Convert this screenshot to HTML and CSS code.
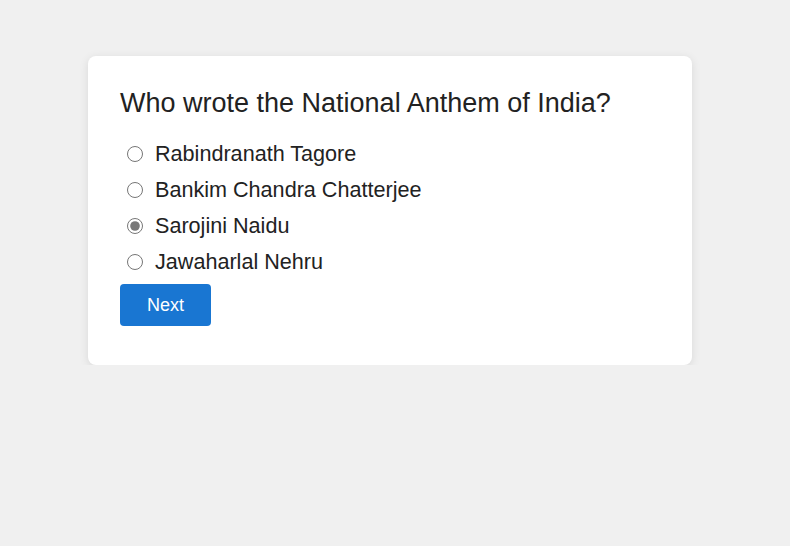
FILE: index.html
```html
<!DOCTYPE html>
<html>
<head>
<meta charset="utf-8">
<link rel="stylesheet" href="styles.css">
</head>
<body>
<div class="quiz">
  <h2 class="question">Who wrote the National Anthem of India?</h2>
  <div class="options">
    <label class="option"><input type="radio" name="q"> Rabindranath Tagore</label>
    <label class="option"><input type="radio" name="q"> Bankim Chandra Chatterjee</label>
    <label class="option"><input type="radio" name="q" checked> Sarojini Naidu</label>
    <label class="option"><input type="radio" name="q"> Jawaharlal Nehru</label>
  </div>
  <button class="next">Next</button>
</div>
</body>
</html>
```
FILE: styles.css
```css
html, body {
  margin: 0;
  padding: 0;
}
body {
  background: #f0f0f0;
  font-family: "Liberation Sans", Arial, sans-serif;
  color: #222;
  padding: 56px 98px 0 88px;
}
.quiz {
  background: #fff;
  width: 540px;
  padding: 32px 32px 39px;
  border-radius: 8px;
  box-shadow: 0 2px 10px rgba(0,0,0,0.1);
}
.question {
  font-size: 27px;
  line-height: 31px;
  font-weight: normal;
  margin: 0 0 17px;
}
.options {
  display: flex;
  flex-direction: column;
}
.option {
  font-size: 21.6px;
  line-height: 36px;
  height: 36px;
  display: flex;
  align-items: center;
}
.option input {
  width: 16px;
  height: 16px;
  margin: 0 12px 0 7px;
  accent-color: #777;
}
.next {
  display: block;
  margin-top: 4px;
  width: 91px;
  height: 42px;
  background: #1976d2;
  color: #fff;
  border: none;
  border-radius: 4px;
  font-family: "Liberation Sans", Arial, sans-serif;
  font-size: 18px;
}
```
